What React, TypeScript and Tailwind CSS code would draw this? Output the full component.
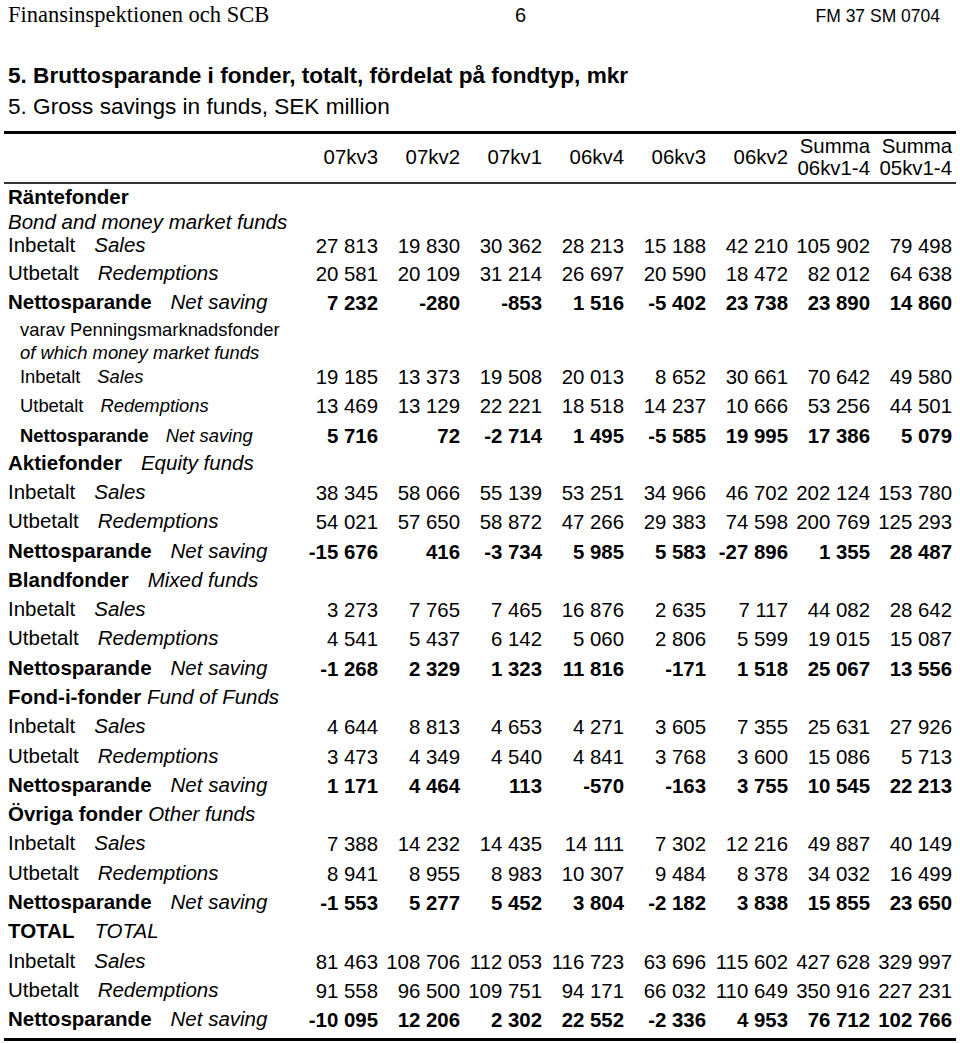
import type { ReactNode } from "react";

const sans = "font-['Liberation_Sans',Arial,sans-serif]";

const columns: string[][] = [
  ["07kv3"],
  ["07kv2"],
  ["07kv1"],
  ["06kv4"],
  ["06kv3"],
  ["06kv2"],
  ["Summa", "06kv1-4"],
  ["Summa", "05kv1-4"],
];

type Block = {
  title: ReactNode;
  titleH: number;
  rows: string[][];
  heights: number[];
};

const STEP = 29.31;

const blocks: Block[] = [
  {
    title: (
      <>
        <span className="font-bold">Aktiefonder</span>
        <span className="ml-[19px] italic">Equity funds</span>
      </>
    ),
    titleH: 27.9,
    heights: [STEP, STEP, STEP],
    rows: [
      ["38 345", "58 066", "55 139", "53 251", "34 966", "46 702", "202 124", "153 780"],
      ["54 021", "57 650", "58 872", "47 266", "29 383", "74 598", "200 769", "125 293"],
      ["-15 676", "416", "-3 734", "5 985", "5 583", "-27 896", "1 355", "28 487"],
    ],
  },
  {
    title: (
      <>
        <span className="font-bold">Blandfonder</span>
        <span className="ml-[19px] italic">Mixed funds</span>
      </>
    ),
    titleH: STEP,
    heights: [STEP, STEP, STEP],
    rows: [
      ["3 273", "7 765", "7 465", "16 876", "2 635", "7 117", "44 082", "28 642"],
      ["4 541", "5 437", "6 142", "5 060", "2 806", "5 599", "19 015", "15 087"],
      ["-1 268", "2 329", "1 323", "11 816", "-171", "1 518", "25 067", "13 556"],
    ],
  },
  {
    title: (
      <>
        <span className="font-bold">Fond-i-fonder</span> <span className="italic">Fund of Funds</span>
      </>
    ),
    titleH: STEP,
    heights: [STEP, STEP, STEP],
    rows: [
      ["4 644", "8 813", "4 653", "4 271", "3 605", "7 355", "25 631", "27 926"],
      ["3 473", "4 349", "4 540", "4 841", "3 768", "3 600", "15 086", "5 713"],
      ["1 171", "4 464", "113", "-570", "-163", "3 755", "10 545", "22 213"],
    ],
  },
  {
    title: (
      <>
        <span className="font-bold">Övriga fonder</span> <span className="italic">Other funds</span>
      </>
    ),
    titleH: STEP,
    heights: [STEP, STEP, STEP],
    rows: [
      ["7 388", "14 232", "14 435", "14 111", "7 302", "12 216", "49 887", "40 149"],
      ["8 941", "8 955", "8 983", "10 307", "9 484", "8 378", "34 032", "16 499"],
      ["-1 553", "5 277", "5 452", "3 804", "-2 182", "3 838", "15 855", "23 650"],
    ],
  },
  {
    title: (
      <>
        <span className="font-bold">TOTAL</span>
        <span className="ml-[20px] italic">TOTAL</span>
      </>
    ),
    titleH: STEP,
    heights: [STEP, STEP, STEP],
    rows: [
      ["81 463", "108 706", "112 053", "116 723", "63 696", "115 602", "427 628", "329 997"],
      ["91 558", "96 500", "109 751", "94 171", "66 032", "110 649", "350 916", "227 231"],
      ["-10 095", "12 206", "2 302", "22 552", "-2 336", "4 953", "76 712", "102 766"],
    ],
  },
];

const rowLabels = (small: boolean) => {
  const gap = small ? "ml-[17px]" : "ml-[19px]";
  return [
    <>
      <span>Inbetalt</span>
      <span className={`${gap} italic`}>Sales</span>
    </>,
    <>
      <span>Utbetalt</span>
      <span className={`${gap} italic`}>Redemptions</span>
    </>,
    <>
      <span className="font-bold">Nettosparande</span>
      <span className={`${gap} italic`}>Net saving</span>
    </>,
  ];
};

const Row = ({
  h,
  label,
  values,
  bold,
  small,
}: {
  h: number;
  label: ReactNode;
  values?: string[];
  bold?: boolean;
  small?: boolean;
}) => (
  <div className="grid grid-cols-[292px_repeat(8,82px)] items-end" style={{ height: h }}>
    <div
      className={`whitespace-nowrap pb-[2px] ${
        small ? "pl-[16px] text-[18.4px] leading-[21px]" : "pl-[4px] text-[20.5px] leading-[23px]"
      }`}
    >
      {label}
    </div>
    {values?.map((v, i) => (
      <div
        key={i}
        className={`whitespace-nowrap text-right text-[20.4px] leading-[23px] ${bold ? "font-bold" : ""}`}
      >
        {v}
      </div>
    ))}
  </div>
);

const App = () => {
  const bigLabels = rowLabels(false);
  const smallLabels = rowLabels(true);

  return (
    <div className={`h-[1043px] w-[960px] overflow-hidden bg-white text-black ${sans}`}>
      {/* page header */}
      <div className="flex h-[22px] items-baseline">
        <span className="w-[515px] pl-[8px] font-['Liberation_Serif','Times_New_Roman',serif] text-[22.5px] leading-[22px]">
          Finansinspektionen och SCB
        </span>
        <span className="text-[20px]">6</span>
        <span className="ml-auto pr-[20px] text-[17.5px]">FM 37 SM 0704</span>
      </div>

      <h1 className="mt-[40.5px] pl-[8px] text-[22.6px] font-bold leading-[26px]">
        5. Bruttosparande i fonder, totalt, fördelat på fondtyp, mkr
      </h1>
      <p className="mt-[5.7px] pl-[8px] text-[22.6px] leading-[26px]">
        5. Gross savings in funds, SEK million
      </p>

      {/* table */}
      <div className="ml-[4px] mt-[10.8px] w-[952px]">
        <div className="h-[3px] bg-black" />
        <div className="grid h-[48px] grid-cols-[292px_repeat(8,82px)] items-center">
          <div />
          {columns.map((c, i) => (
            <div key={i} className="text-right text-[20.4px] leading-[21.7px]">
              {c.map((line) => (
                <div key={line}>{line}</div>
              ))}
            </div>
          ))}
        </div>
        <div className="h-[2px] bg-[#333]" />

        {/* Räntefonder */}
        <Row h={26.4} label={<span className="font-bold">Räntefonder</span>} />
        <Row h={22.7} label={<span className="italic">Bond and money market funds</span>} />
        <Row
          h={23.3}
          label={bigLabels[0]}
          values={["27 813", "19 830", "30 362", "28 213", "15 188", "42 210", "105 902", "79 498"]}
        />
        <Row
          h={30}
          label={bigLabels[1]}
          values={["20 581", "20 109", "31 214", "26 697", "20 590", "18 472", "82 012", "64 638"]}
        />
        <Row
          h={29}
          bold
          label={bigLabels[2]}
          values={["7 232", "-280", "-853", "1 516", "-5 402", "23 738", "23 890", "14 860"]}
        />

        {/* varav Penningsmarknadsfonder */}
        <Row h={26.7} small label={<span>varav Penningsmarknadsfonder</span>} />
        <Row h={20.7} small label={<span className="italic">of which money market funds</span>} />
        <Row
          h={26}
          small
          label={smallLabels[0]}
          values={["19 185", "13 373", "19 508", "20 013", "8 652", "30 661", "70 642", "49 580"]}
        />
        <Row
          h={29.6}
          small
          label={smallLabels[1]}
          values={["13 469", "13 129", "22 221", "18 518", "14 237", "10 666", "53 256", "44 501"]}
        />
        <Row
          h={29.4}
          small
          bold
          label={smallLabels[2]}
          values={["5 716", "72", "-2 714", "1 495", "-5 585", "19 995", "17 386", "5 079"]}
        />

        {blocks.map((b, bi) => (
          <div key={bi}>
            <Row h={b.titleH} label={b.title} />
            {b.rows.map((r, ri) => (
              <Row key={ri} h={b.heights[ri]} label={bigLabels[ri]} values={r} bold={ri === 2} />
            ))}
          </div>
        ))}

        <div className="mt-[5.7px] h-[3px] bg-black" />
      </div>
    </div>
  );
};

export default App;
